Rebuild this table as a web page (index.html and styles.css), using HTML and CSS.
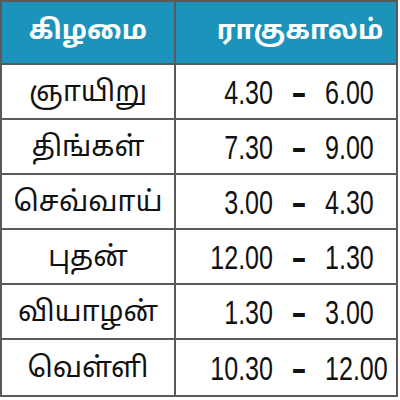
FILE: index.html
```html
<!DOCTYPE html>
<html lang="ta">
<head>
<meta charset="utf-8">
<link rel="stylesheet" href="styles.css">
</head>
<body>
<div class="table">
  <div class="cell head">கிழமை</div>
  <div class="cell head head-r">ராகுகாலம்</div>

  <div class="cell day">ஞாயிறு</div>
  <div class="cell time"><span class="a">4.30</span><span class="d">-</span><span class="b">6.00</span></div>

  <div class="cell day">திங்கள்</div>
  <div class="cell time"><span class="a">7.30</span><span class="d">-</span><span class="b">9.00</span></div>

  <div class="cell day">செவ்வாய்</div>
  <div class="cell time"><span class="a">3.00</span><span class="d">-</span><span class="b">4.30</span></div>

  <div class="cell day">புதன்</div>
  <div class="cell time"><span class="a">12.00</span><span class="d">-</span><span class="b">1.30</span></div>

  <div class="cell day">வியாழன்</div>
  <div class="cell time"><span class="a">1.30</span><span class="d">-</span><span class="b">3.00</span></div>

  <div class="cell day">வெள்ளி</div>
  <div class="cell time"><span class="a">10.30</span><span class="d">-</span><span class="b">12.00</span></div>
</div>
</body>
</html>
```
FILE: styles.css
```css
html, body {
  margin: 0;
  padding: 0;
  background: #ffffff;
}
body {
  width: 400px;
  height: 400px;
  overflow: hidden;
}
.table {
  width: 394px;
  display: grid;
  grid-template-columns: 172px 220px;
  grid-template-rows: 61px repeat(5, 53px) 55px;
  gap: 2px;
  padding: 2px;
  background: #5a5a5a;
}
.cell {
  background: #ffffff;
  display: flex;
  align-items: center;
  justify-content: center;
  color: #111111;
}
.head {
  background: #1b93bb;
  color: #ffffff;
  font-family: "Noto Sans Tamil", "Lohit Tamil", "Noto Sans", sans-serif;
  font-weight: 700;
  font-size: 27px;
}
.head-r {
  padding-left: 28px;
}
.day {
  font-family: "Noto Sans Tamil", "Lohit Tamil", "Noto Sans", sans-serif;
  font-size: 28px;
  padding-top: 5px;
}
.time {
  font-family: "Liberation Sans Narrow", "Liberation Sans", sans-serif;
  font-size: 33px;
  justify-content: flex-start;
  padding-top: 2px;
}
.a, .d, .b {
  display: inline-block;
  white-space: nowrap;
}
.a {
  width: 97px;
  text-align: right;
  transform: scaleX(0.76);
  transform-origin: right center;
}
.d {
  width: 52px;
  text-align: center;
  font-weight: 700;
  transform: scaleX(1.4);
}
.b {
  width: 70px;
  text-align: left;
  transform: scaleX(0.76);
  transform-origin: left center;
}
```
